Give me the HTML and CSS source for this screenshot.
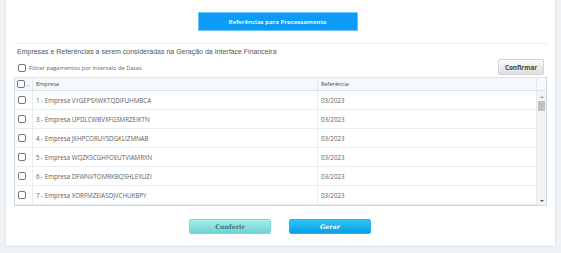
FILE: index.html
```html
<!DOCTYPE html>
<html lang="pt">
<head>
  <meta charset="UTF-8" />
  <title>Interface Financeira</title>
  <link rel="stylesheet" href="styles.css">
</head>
<body>
  <div class="panel">
    <div class="top">
      <button class="btn-ref">Referências para Processamento</button>
    </div>
    <div class="sep"></div>
    <div class="title">Empresas e Referências a serem consideradas na Geração da Interface Financeira</div>

    <div class="filter">
      <label><span class="chk"></span>Filtrar pagamentos por Intervalo de Datas</label>
      <button class="btn-gray">Confirmar</button>
    </div>

    <div class="grid">
      <div class="head">
        <div class="cell c-chk"><span class="chk"></span><span class="dots">..</span></div>
        <div class="cell c-emp">Empresa</div>
        <div class="cell c-ref">Referência</div>
        <div class="cell c-sb"></div>
      </div>
      <div class="body">
        <div class="rows">
          <div class="row"><div class="cell c-chk"><span class="chk"></span></div><div class="cell c-emp">1 - Empresa VYGEPSXWKTQDIFUHMBCA</div><div class="cell c-ref">03/2023</div></div>
          <div class="row"><div class="cell c-chk"><span class="chk"></span></div><div class="cell c-emp">3 - Empresa UPDLCWBVXFGSMRZEIKTN</div><div class="cell c-ref">03/2023</div></div>
          <div class="row"><div class="cell c-chk"><span class="chk"></span></div><div class="cell c-emp">4 - Empresa JXHPCORUYSDGKLIZMNAB</div><div class="cell c-ref">03/2023</div></div>
          <div class="row"><div class="cell c-chk"><span class="chk"></span></div><div class="cell c-emp">5 - Empresa WQZKSCGHFOEUTVIAMRXN</div><div class="cell c-ref">03/2023</div></div>
          <div class="row"><div class="cell c-chk"><span class="chk"></span></div><div class="cell c-emp">6 - Empresa DFWNVTOMRKBQSHLEXUZI</div><div class="cell c-ref">03/2023</div></div>
          <div class="row"><div class="cell c-chk"><span class="chk"></span></div><div class="cell c-emp">7 - Empresa XORFMZEIASDJVCHUKBPY</div><div class="cell c-ref">03/2023</div></div>
        </div>
        <div class="scrollbar">
          <span class="arrow up"></span>
          <span class="thumb"></span>
          <span class="track"></span>
          <span class="arrow down"></span>
        </div>
      </div>
    </div>

    <div class="actions">
      <button class="btn-teal">Conferir</button>
      <button class="btn-blue">Gerar</button>
    </div>
  </div>
</body>
</html>
```

FILE: styles.css
```css
body {
  margin: 0;
  background: #eef3f8;
  font-family: "Open Sans", Arial, sans-serif;
  color: #444;
}
.panel {
  margin: 0 5px;
  height: 247px;
  box-sizing: border-box;
  background: white;
  border: 1px solid #dce6ef;
  border-top: none;
  padding: 12px 8px 0 8px;
}
.top {
  display: flex;
  justify-content: center;
  padding-right: 6px;
}
.btn-ref {
  width: 160px;
  height: 19px;
  background: #0b9cf7;
  border: 1px solid #6fc3f7;
  color: #e8f5ff;
  font-family: "Open Sans", Arial, sans-serif;
  font-size: 6px;
  font-weight: bold;
  padding: 0;
}
.sep {
  margin: 12px 0 0 1px;
  width: 533px;
  height: 1px;
  background: #ececec;
}
.title {
  margin: 2px 0 0 3px;
  font-family: "Liberation Sans", Arial, sans-serif;
  font-size: 7px;
  color: #555;
  line-height: 12px;
}
.filter {
  display: flex;
  justify-content: space-between;
  align-items: flex-end;
  height: 16px;
  margin-top: 1px;
  padding: 0 3px 0 4px;
}
.filter label {
  display: flex;
  align-items: center;
  gap: 3px;
  font-size: 5.8px;
  color: #666;
  height: 11px;
  margin-bottom: 2px;
}
.chk {
  display: inline-block;
  width: 8px;
  height: 8px;
  box-sizing: border-box;
  border: 1px solid #777;
  border-radius: 2px;
  background: white;
}
.btn-gray {
  width: 46px;
  height: 16px;
  padding: 0;
  background: linear-gradient(#fbfbfb, #dedede);
  border: 1px solid #d2d2d2;
  border-radius: 2px;
  font-family: "Open Sans", Arial, sans-serif;
  font-size: 6.3px;
  font-weight: bold;
  color: #444;
}
.grid {
  margin-top: 2px;
  width: 533px;
  border: 1px solid #cfd8e2;
  border-top-color: #dfe6ee;
  box-sizing: border-box;
}
.head {
  display: flex;
  height: 12px;
  background: #f6f9fc;
  border-bottom: 1px solid #dae2ea;
}
.cell {
  display: flex;
  align-items: center;
  box-sizing: border-box;
  font-size: 6.2px;
  color: #5c5c5c;
}
.head .cell {
  font-size: 5.6px;
  color: #345;
}
.c-chk {
  width: 17px;
  padding-left: 2px;
}
.c-emp {
  width: 285px;
  padding-left: 3px;
  border-left: 1px solid #e3e9ef;
}
.c-ref {
  width: 219px;
  padding-left: 3px;
  border-left: 1px solid #e3e9ef;
}
.c-sb {
  flex: 1;
  border-left: 1px solid #e3e9ef;
}
.dots {
  font-size: 6px;
  margin-left: 1px;
  color: #666;
}
.body {
  display: flex;
  height: 114px;
}
.rows {
  width: 521px;
}
.row {
  display: flex;
  height: 19px;
  border-bottom: 1px solid #e8edf2;
  box-sizing: border-box;
}
.row .c-chk {
  padding-left: 3px;
}
.row .c-emp, .row .c-ref {
  border-left-color: #e8edf2;
}
.scrollbar {
  flex: 1;
  display: flex;
  flex-direction: column;
  align-items: center;
  background: #f3f3f3;
  border-left: 1px solid #e3e9ef;
  padding: 5px 0 3px 0;
}
.arrow {
  width: 0;
  height: 0;
  border-left: 2px solid transparent;
  border-right: 2px solid transparent;
}
.arrow.up {
  border-bottom: 2px solid #999;
}
.arrow.down {
  border-top: 2px solid #555;
}
.thumb {
  margin-top: 3px;
  width: 7px;
  height: 10px;
  background: #c1c1c1;
}
.track {
  flex: 1;
}
.actions {
  display: flex;
  justify-content: center;
  gap: 18px;
  margin-top: 13px;
  padding-right: 1px;
}
.actions button {
  width: 82px;
  height: 15px;
  padding: 0;
  border-radius: 2px;
  font-family: "DejaVu Serif", serif;
  font-size: 6.3px;
  font-weight: bold;
}
.btn-teal {
  background: linear-gradient(#a6ecea, #6fd3d3);
  border: 1px solid #7fd6d6;
  color: #3c6e78;
}
.btn-blue {
  background: linear-gradient(#2bc6f7, #079fe6);
  border: 1px solid #2bb2ee;
  color: white;
  font-style: italic;
}
```
